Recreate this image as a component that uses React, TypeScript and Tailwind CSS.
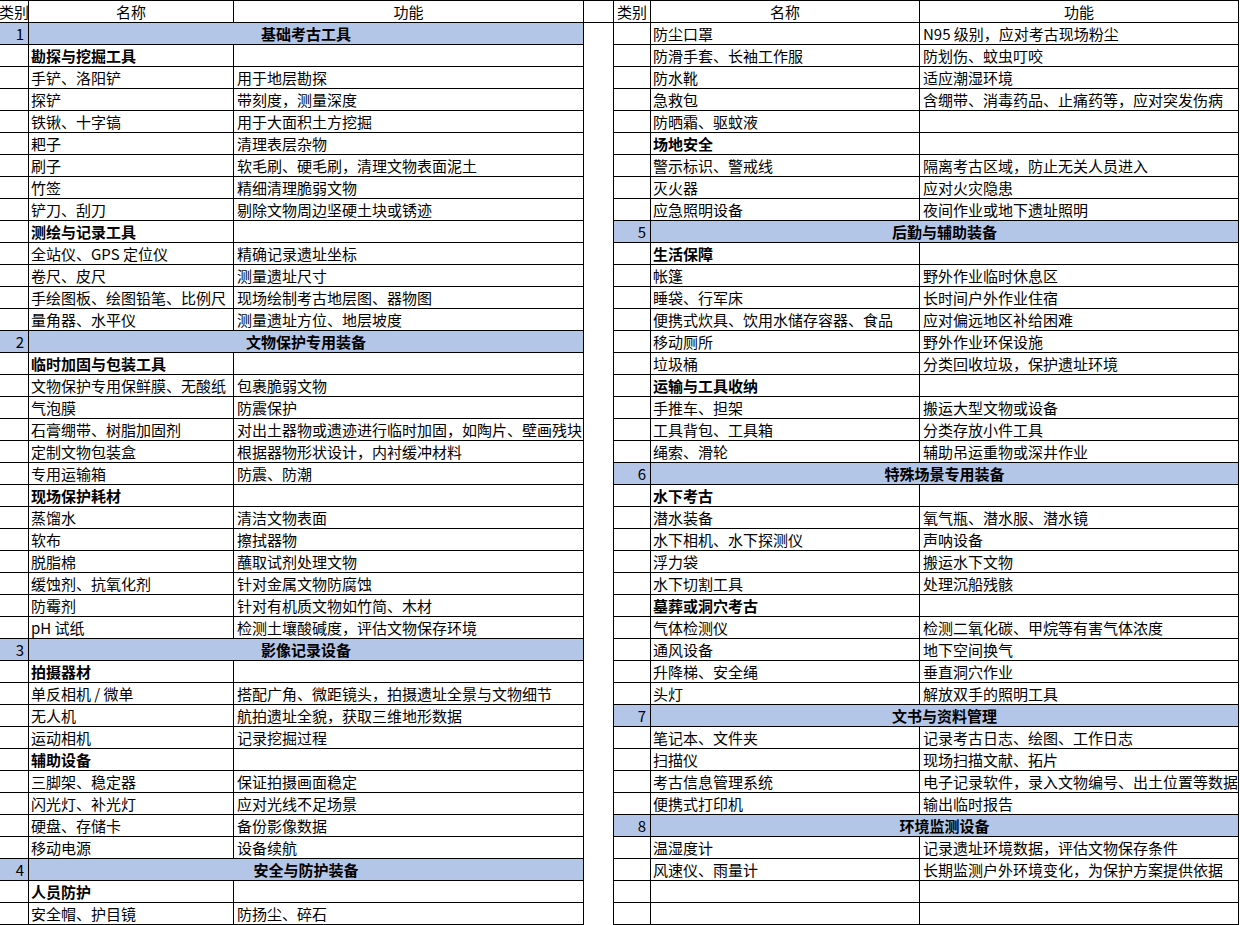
type Row =
  | { kind: "section"; num: string; title: string }
  | { kind: "group"; name: string }
  | { kind: "item"; name: string; fn: string }
  | { kind: "empty" };

const s = (num: string, title: string): Row => ({ kind: "section", num, title });
const g = (name: string): Row => ({ kind: "group", name });
const i = (name: string, fn = ""): Row => ({ kind: "item", name, fn });

const leftRows: Row[] = [
  s("1", "基础考古工具"),
  g("勘探与挖掘工具"),
  i("手铲、洛阳铲", "用于地层勘探"),
  i("探铲", "带刻度，测量深度"),
  i("铁锹、十字镐", "用于大面积土方挖掘"),
  i("耙子", "清理表层杂物"),
  i("刷子", "软毛刷、硬毛刷，清理文物表面泥土"),
  i("竹签", "精细清理脆弱文物"),
  i("铲刀、刮刀", "剔除文物周边坚硬土块或锈迹"),
  g("测绘与记录工具"),
  i("全站仪、GPS 定位仪", "精确记录遗址坐标"),
  i("卷尺、皮尺", "测量遗址尺寸"),
  i("手绘图板、绘图铅笔、比例尺", "现场绘制考古地层图、器物图"),
  i("量角器、水平仪", "测量遗址方位、地层坡度"),
  s("2", "文物保护专用装备"),
  g("临时加固与包装工具"),
  i("文物保护专用保鲜膜、无酸纸", "包裹脆弱文物"),
  i("气泡膜", "防震保护"),
  i("石膏绷带、树脂加固剂", "对出土器物或遗迹进行临时加固，如陶片、壁画残块"),
  i("定制文物包装盒", "根据器物形状设计，内衬缓冲材料"),
  i("专用运输箱", "防震、防潮"),
  g("现场保护耗材"),
  i("蒸馏水", "清洁文物表面"),
  i("软布", "擦拭器物"),
  i("脱脂棉", "蘸取试剂处理文物"),
  i("缓蚀剂、抗氧化剂", "针对金属文物防腐蚀"),
  i("防霉剂", "针对有机质文物如竹简、木材"),
  i("pH 试纸", "检测土壤酸碱度，评估文物保存环境"),
  s("3", "影像记录设备"),
  g("拍摄器材"),
  i("单反相机 / 微单", "搭配广角、微距镜头，拍摄遗址全景与文物细节"),
  i("无人机", "航拍遗址全貌，获取三维地形数据"),
  i("运动相机", "记录挖掘过程"),
  g("辅助设备"),
  i("三脚架、稳定器", "保证拍摄画面稳定"),
  i("闪光灯、补光灯", "应对光线不足场景"),
  i("硬盘、存储卡", "备份影像数据"),
  i("移动电源", "设备续航"),
  s("4", "安全与防护装备"),
  g("人员防护"),
  i("安全帽、护目镜", "防扬尘、碎石"),
];

const rightRows: Row[] = [
  i("防尘口罩", "N95 级别，应对考古现场粉尘"),
  i("防滑手套、长袖工作服", "防划伤、蚊虫叮咬"),
  i("防水靴", "适应潮湿环境"),
  i("急救包", "含绷带、消毒药品、止痛药等，应对突发伤病"),
  i("防晒霜、驱蚊液"),
  g("场地安全"),
  i("警示标识、警戒线", "隔离考古区域，防止无关人员进入"),
  i("灭火器", "应对火灾隐患"),
  i("应急照明设备", "夜间作业或地下遗址照明"),
  s("5", "后勤与辅助装备"),
  g("生活保障"),
  i("帐篷", "野外作业临时休息区"),
  i("睡袋、行军床", "长时间户外作业住宿"),
  i("便携式炊具、饮用水储存容器、食品", "应对偏远地区补给困难"),
  i("移动厕所", "野外作业环保设施"),
  i("垃圾桶", "分类回收垃圾，保护遗址环境"),
  g("运输与工具收纳"),
  i("手推车、担架", "搬运大型文物或设备"),
  i("工具背包、工具箱", "分类存放小件工具"),
  i("绳索、滑轮", "辅助吊运重物或深井作业"),
  s("6", "特殊场景专用装备"),
  g("水下考古"),
  i("潜水装备", "氧气瓶、潜水服、潜水镜"),
  i("水下相机、水下探测仪", "声呐设备"),
  i("浮力袋", "搬运水下文物"),
  i("水下切割工具", "处理沉船残骸"),
  g("墓葬或洞穴考古"),
  i("气体检测仪", "检测二氧化碳、甲烷等有害气体浓度"),
  i("通风设备", "地下空间换气"),
  i("升降梯、安全绳", "垂直洞穴作业"),
  i("头灯", "解放双手的照明工具"),
  s("7", "文书与资料管理"),
  i("笔记本、文件夹", "记录考古日志、绘图、工作日志"),
  i("扫描仪", "现场扫描文献、拓片"),
  i("考古信息管理系统", "电子记录软件，录入文物编号、出土位置等数据"),
  i("便携式打印机", "输出临时报告"),
  s("8", "环境监测设备"),
  i("温湿度计", "记录遗址环境数据，评估文物保存条件"),
  i("风速仪、雨量计", "长期监测户外环境变化，为保护方案提供依据"),
  { kind: "empty" },
  { kind: "empty" },
];

type Widths = { cat: string; name: string; fn: string; merged: string };

const leftW: Widths = { cat: "w-[29px]", name: "w-[205px]", fn: "w-[350px]", merged: "w-[555px]" };
const rightW: Widths = { cat: "w-[37px]", name: "w-[269px]", fn: "w-[319px]", merged: "w-[588px]" };

const cell = "h-full flex items-center border-r border-black whitespace-nowrap overflow-visible";

function TableRow({ row, w }: { row: Row; w: Widths }) {
  if (row.kind === "section") {
    return (
      <div className="flex h-[22px] border-b border-black bg-[#b4c6e7]">
        <div className={`${w.cat} ${cell} justify-end pr-[4px]`}>{row.num}</div>
        <div className={`${w.merged} ${cell} justify-center font-bold`}>{row.title}</div>
      </div>
    );
  }
  const name = row.kind === "empty" ? "" : row.name;
  const fn = row.kind === "item" ? row.fn : "";
  return (
    <div className="flex h-[22px] border-b border-black">
      <div className={`${w.cat} ${cell}`}></div>
      <div className={`${w.name} ${cell} pl-[2px] ${row.kind === "group" ? "font-bold" : ""}`}>{name}</div>
      <div className={`${w.fn} ${cell} pl-[3px]`}>{fn}</div>
    </div>
  );
}

function HeaderCells({ w }: { w: Widths }) {
  return (
    <>
      <div className={`${w.cat} ${cell} justify-center`}>类别</div>
      <div className={`${w.name} ${cell} justify-center`}>名称</div>
      <div className={`${w.fn} ${cell} justify-center`}>功能</div>
    </>
  );
}

export default function App() {
  return (
    <div
      className="w-[1240px] h-[925px] bg-white text-black text-[15px] leading-none overflow-hidden"
      style={{ fontFamily: '"Noto Sans CJK SC", "Liberation Sans", sans-serif' }}
    >
      <div className="flex h-[23px] border-t border-b border-black w-[1239px]">
        <HeaderCells w={leftW} />
        <div className={`w-[30px] ${cell}`}></div>
        <HeaderCells w={rightW} />
      </div>
      <div className="flex">
        <div className="flex flex-col w-[584px]">
          {leftRows.map((r, k) => (
            <TableRow key={k} row={r} w={leftW} />
          ))}
        </div>
        <div className="w-[30px] h-[902px] border-r border-black"></div>
        <div className="flex flex-col w-[625px]">
          {rightRows.map((r, k) => (
            <TableRow key={k} row={r} w={rightW} />
          ))}
        </div>
      </div>
    </div>
  );
}
